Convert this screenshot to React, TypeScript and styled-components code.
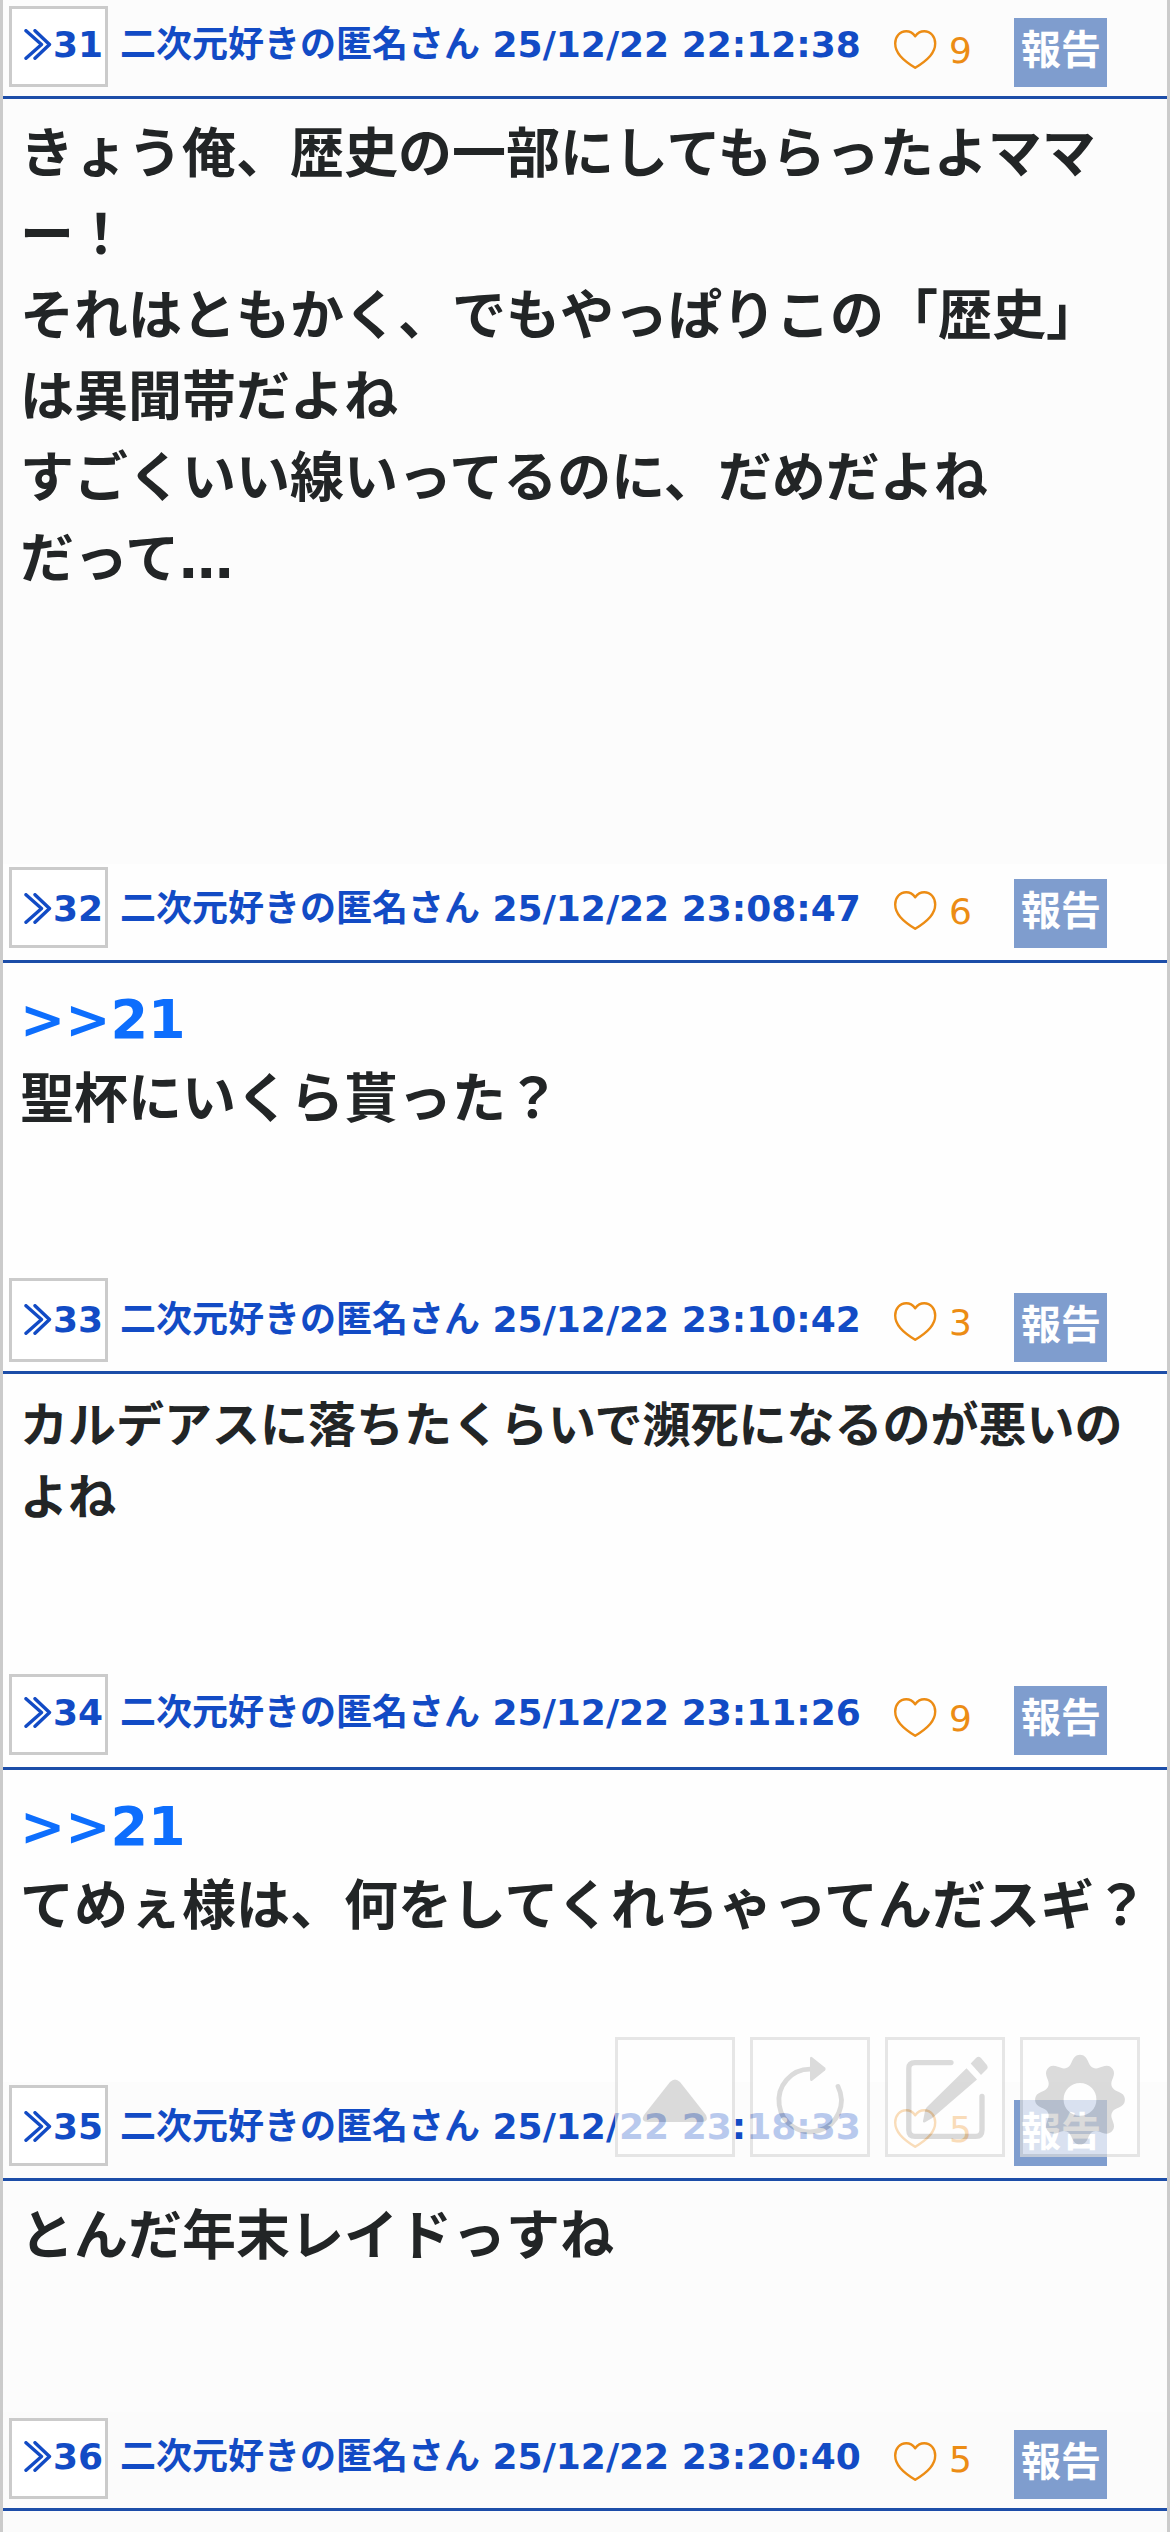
import React from 'react';
import styled, { createGlobalStyle } from 'styled-components';

const GlobalStyle = createGlobalStyle`
  * { box-sizing: border-box; }
  body { margin: 0; background: #fcfcfc; }
`;

const FONT = `"DejaVu Sans", "Noto Sans CJK JP", sans-serif`;

const Thread = styled.main`
  width: 1170px;
  height: 2532px;
  overflow: hidden;
  border: solid #cbcbcb;
  border-width: 0 3px;
  background: #fcfcfc;
  font-family: ${FONT};
  color: #222526;
  position: relative;
`;

const Post = styled.article<{ $height: number; $tint: string }>`
  height: ${(p) => p.$height}px;
  background: ${(p) => p.$tint};
`;

const Header = styled.header`
  height: 99px;
  display: flex;
  align-items: flex-start;
  border-bottom: 3px solid #1c4da8;
  padding-left: 6px;
`;

const NumberBox = styled.a<{ $lift: number; $textLift: number; $tall: number }>`
  flex: none;
  width: 99px;
  height: ${(p) => p.$tall}px;
  margin-top: ${(p) => 6 - p.$lift}px;
  padding: ${(p) => 15 + p.$lift - p.$textLift}px 0 0 12px;
  border: 3px solid #cbcbcb;
  background: #fff;
  display: flex;
  align-items: flex-start;
  font-size: 36px;
  line-height: 42px;
  font-weight: 700;
  color: #124bc5;
  white-space: nowrap;
`;

const Chevrons = styled.svg`
  flex: none;
  width: 28px;
  height: 31px;
  margin: 5px 1px 0 0;
`;

const Byline = styled.span<{ $textLift: number }>`
  flex: none;
  width: 773px;
  margin: ${(p) => 19 - p.$textLift}px 0 0 12px;
  font-size: 36px;
  line-height: 52px;
  font-weight: 700;
  color: #124bc5;
  white-space: nowrap;
`;

const Like = styled.span<{ $lift: number }>`
  flex: none;
  display: flex;
  align-items: flex-start;
  width: 122px;
  margin-top: ${(p) => 30 - p.$lift}px;
  color: #ec8c14;
  font-size: 36px;
  line-height: 42px;
`;

const LikeCount = styled.span<{ $lift: number }>`
  margin-top: ${(p) => -p.$lift}px;
`;

const Heart = styled.svg`
  width: 44px;
  height: 40px;
  margin-right: 12px;
`;

const Report = styled.button<{ $lift: number; $tall: number }>`
  flex: none;
  width: 93px;
  height: ${(p) => p.$tall}px;
  margin: ${(p) => 18 - p.$lift}px 0 0 -1px;
  padding: 0 0 0 1px;
  border: 0;
  background: #7f9dce;
  color: #fff;
  font: 700 40px/64px ${FONT};
  display: flex;
  align-items: flex-start;
  justify-content: center;
  white-space: nowrap;
`;

const Body = styled.p<{ $size: number }>`
  margin: 0;
  padding: 15px 15px 0 17px;
  font-size: ${(p) => p.$size}px;
  line-height: 1.5;
  font-weight: 700;
`;

const Line = styled.span<{ $single: boolean }>`
  display: block;
  white-space: ${(p) => (p.$single ? 'nowrap' : 'normal')};
`;

const Anchor = styled.a`
  display: block;
  height: 81px;
  padding-top: 1px;
  color: #0d6efd;
`;

const Tools = styled.nav`
  position: absolute;
  top: 2037px;
  left: 612px;
  display: flex;
  gap: 15px;
  opacity: 0.7;
`;

const Tool = styled.button`
  width: 120px;
  height: 120px;
  padding: 0;
  border: 3px solid #dcdcdc;
  background: #fff;
  display: flex;
  align-items: center;
  justify-content: center;
`;

const ToolIcon = styled.svg`
  flex: none;
  width: 114px;
  height: 114px;
  color: #cdcdcd;
`;

type PostData = {
  id: number;
  time: string;
  likes: number;
  height: number;
  tint: string;
  size?: number;
  anchor?: string;
  single?: boolean;
  lines: string[];
  boxLift?: number;
  boxTall?: number;
  textLift?: number;
  likeLift?: number;
  countLift?: number;
  reportLift?: number;
  reportTall?: number;
};

const posts: PostData[] = [
  {
    id: 31, time: '22:12:38', likes: 9, height: 864, tint: '#fcfcfc',
    lines: ['きょう俺、歴史の一部にしてもらったよママー！', 'それはともかく、でもやっぱりこの「歴史」は異聞帯だよね', 'すごくいい線いってるのに、だめだよね', 'だって…'],
  },
  {
    id: 32, time: '23:08:47', likes: 6, height: 411, tint: '#fefefe', anchor: '>>21',
    lines: ['聖杯にいくら貰った？'], boxLift: 3, likeLift: 3, reportLift: 3,
  },
  {
    id: 33, time: '23:10:42', likes: 3, height: 396, tint: '#fefefe', size: 48,
    lines: ['カルデアスに落ちたくらいで瀕死になるのが悪いのよね'], boxLift: 3, boxTall: 84, likeLift: 3,
  },
  {
    id: 34, time: '23:11:26', likes: 9, height: 411, tint: '#fefefe', anchor: '>>21', single: true,
    lines: ['てめぇ様は、何をしてくれちゃってんだスギ？'], boxLift: 3, textLift: 3, likeLift: 3, reportLift: 3,
  },
  {
    id: 35, time: '23:18:33', likes: 5, height: 330, tint: '#fcfcfc',
    lines: ['とんだ年末レイドっすね'], boxLift: 3, likeLift: 3, reportTall: 66,
  },
  { id: 36, time: '23:20:40', likes: 5, height: 123, tint: '#fbfbfb', lines: [], countLift: 3 },
];

function gearPath(): string {
  let d = '';
  const steps = 160;
  for (let i = 0; i <= steps; i++) {
    const a = (i / steps) * Math.PI * 2;
    const r = 39.7 + (5.2 * Math.tanh(Math.cos(8 * a))) / Math.tanh(1);
    d += `${i ? 'L' : 'M'}${(57 + r * Math.sin(a)).toFixed(2)} ${(59.7 - r * Math.cos(a)).toFixed(2)}`;
  }
  return `${d}ZM57 43a16.400 16.400 0 1 0 0 32.800a16.400 16.400 0 1 0 0-32.800Z`;
}

function PostItem({ post }: { post: PostData }) {
  const textLift = post.textLift ?? 0;
  return (
    <Post $height={post.height} $tint={post.tint}>
      <Header>
        <NumberBox $lift={post.boxLift ?? 0} $textLift={textLift} $tall={post.boxTall ?? 81}>
          <Chevrons viewBox="0 0 28 31" fill="none" stroke="currentColor" strokeWidth="3.400" strokeLinecap="round" strokeLinejoin="round">
            <path d="M2 1.700L17.500 15.500L2 29.300M11 1.700L25.500 15.500L11 29.300" />
          </Chevrons>
          {post.id}
        </NumberBox>
        <Byline $textLift={textLift}>二次元好きの匿名さん 25/12/22 {post.time}</Byline>
        <Like $lift={post.likeLift ?? 0}>
          <Heart viewBox="0 0 44 40" fill="none" stroke="currentColor" strokeWidth="2.400" strokeLinejoin="round">
            <path d="M22.200 6.200C19.800 3 16.800 1.300 13.200 1.300C6.800 1.300 2.200 6.500 2.200 13.500C2.200 22.500 9 29.500 22.200 37.800C35.400 29.500 42.200 22.500 42.200 13.500C42.200 6.500 37.600 1.300 31.200 1.300C27.600 1.300 24.600 3 22.200 6.200Z" />
          </Heart>
          <LikeCount $lift={post.countLift ?? 0}>{post.likes}</LikeCount>
        </Like>
        <Report $lift={post.reportLift ?? 0} $tall={post.reportTall ?? 69}>報告</Report>
      </Header>
      {post.lines.length > 0 && (
        <Body $size={post.size ?? 54}>
          {post.anchor && <Anchor>{post.anchor}</Anchor>}
          {post.lines.map((line) => (
            <Line key={line} $single={post.single ?? false}>{line}</Line>
          ))}
        </Body>
      )}
    </Post>
  );
}

export default function App() {
  return (
    <Thread>
      <GlobalStyle />
      {posts.map((post) => (
        <PostItem key={post.id} post={post} />
      ))}
      <Tools>
        <Tool aria-label="上へ">
          <ToolIcon viewBox="0 0 114 114" fill="currentColor">
            <path d="M52 42Q57 37 62 42L88 75Q91 82 84 82H30Q22 82 26 75Z" />
          </ToolIcon>
        </Tool>
        <Tool aria-label="更新">
          <ToolIcon viewBox="0 0 114 114" fill="none" stroke="currentColor" strokeWidth="4.800" strokeLinecap="round">
            <path d="M57.500 29.200A31.200 31.300 0 1 0 85 46.500" />
            <path d="M57 19Q57 15.500 59.500 17.500L72 27.500Q73.500 29 72 30.500L59.500 40.500Q57 42 57 39Z" fill="currentColor" stroke="none" />
          </ToolIcon>
        </Tool>
        <Tool aria-label="書き込む">
          <ToolIcon viewBox="0 0 114 114" fill="none" stroke="currentColor" strokeWidth="5.300" strokeLinecap="round">
            <path d="M63 22.600H27Q20.800 22.600 20.800 28.500V90Q20.800 96.300 27 96.300H88Q94 96.300 94 90V56.500" />
            <path d="M78.500 28.300L89 39.500L45.500 77Q44.500 78 43 78.800L37 82.300Q34.500 83 35 81L37 71Q37.300 69 38.500 67.500Z" fill="currentColor" stroke="none" />
            <path d="M82.700 23.500L88 18Q90.500 15.500 93 18L98.500 24.500Q100.500 27 99 29L93 35Z" fill="currentColor" stroke="none" />
          </ToolIcon>
        </Tool>
        <Tool aria-label="設定">
          <ToolIcon viewBox="0 0 114 114" fill="currentColor" fillRule="evenodd">
            <path d={gearPath()} />
          </ToolIcon>
        </Tool>
      </Tools>
    </Thread>
  );
}
